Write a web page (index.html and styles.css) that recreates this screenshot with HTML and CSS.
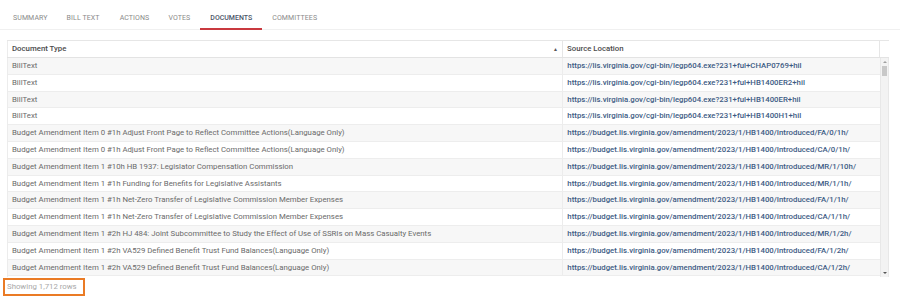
FILE: index.html
```html
<!DOCTYPE html>
<html>
<head>
<meta charset="utf-8">
<link rel="stylesheet" href="styles.css">
</head>
<body>
<div class="tabs">
  <div class="tab">Summary</div>
  <div class="tab">Bill Text</div>
  <div class="tab">Actions</div>
  <div class="tab">Votes</div>
  <div class="tab active">Documents</div>
  <div class="tab">Committees</div>
</div>
<div class="grid">
  <div class="head">
    <div class="hcell c1"><span>Document Type</span><span class="sort">&#9650;</span></div>
    <div class="hcell c2">Source Location</div>
    <div class="hpad"></div>
  </div>
  <div class="body">
    <div class="rows">
      <div class="row"><div class="cell c1">BillText</div><div class="cell c2 link">https://lis.virginia.gov/cgi-bin/legp604.exe?231+ful+CHAP0769+hil</div></div>
      <div class="row"><div class="cell c1">BillText</div><div class="cell c2 link">https://lis.virginia.gov/cgi-bin/legp604.exe?231+ful+HB1400ER2+hil</div></div>
      <div class="row"><div class="cell c1">BillText</div><div class="cell c2 link">https://lis.virginia.gov/cgi-bin/legp604.exe?231+ful+HB1400ER+hil</div></div>
      <div class="row"><div class="cell c1">BillText</div><div class="cell c2 link">https://lis.virginia.gov/cgi-bin/legp604.exe?231+ful+HB1400H1+hil</div></div>
      <div class="row"><div class="cell c1">Budget Amendment Item 0 #1h Adjust Front Page to Reflect Committee Actions(Language Only)</div><div class="cell c2 link">https://budget.lis.virginia.gov/amendment/2023/1/HB1400/Introduced/FA/0/1h/</div></div>
      <div class="row"><div class="cell c1">Budget Amendment Item 0 #1h Adjust Front Page to Reflect Committee Actions(Language Only)</div><div class="cell c2 link">https://budget.lis.virginia.gov/amendment/2023/1/HB1400/Introduced/CA/0/1h/</div></div>
      <div class="row"><div class="cell c1">Budget Amendment Item 1 #10h HB 1937: Legislator Compensation Commission</div><div class="cell c2 link">https://budget.lis.virginia.gov/amendment/2023/1/HB1400/Introduced/MR/1/10h/</div></div>
      <div class="row"><div class="cell c1">Budget Amendment Item 1 #1h Funding for Benefits for Legislative Assistants</div><div class="cell c2 link">https://budget.lis.virginia.gov/amendment/2023/1/HB1400/Introduced/MR/1/1h/</div></div>
      <div class="row"><div class="cell c1">Budget Amendment Item 1 #1h Net-Zero Transfer of Legislative Commission Member Expenses</div><div class="cell c2 link">https://budget.lis.virginia.gov/amendment/2023/1/HB1400/Introduced/FA/1/1h/</div></div>
      <div class="row"><div class="cell c1">Budget Amendment Item 1 #1h Net-Zero Transfer of Legislative Commission Member Expenses</div><div class="cell c2 link">https://budget.lis.virginia.gov/amendment/2023/1/HB1400/Introduced/CA/1/1h/</div></div>
      <div class="row"><div class="cell c1">Budget Amendment Item 1 #2h HJ 484: Joint Subcommittee to Study the Effect of Use of SSRIs on Mass Casualty Events</div><div class="cell c2 link">https://budget.lis.virginia.gov/amendment/2023/1/HB1400/Introduced/MR/1/2h/</div></div>
      <div class="row"><div class="cell c1">Budget Amendment Item 1 #2h VA529 Defined Benefit Trust Fund Balances(Language Only)</div><div class="cell c2 link">https://budget.lis.virginia.gov/amendment/2023/1/HB1400/Introduced/FA/1/2h/</div></div>
      <div class="row"><div class="cell c1">Budget Amendment Item 1 #2h VA529 Defined Benefit Trust Fund Balances(Language Only)</div><div class="cell c2 link">https://budget.lis.virginia.gov/amendment/2023/1/HB1400/Introduced/CA/1/2h/</div></div>
    </div>
    <div class="scrollbar">
      <div class="arrow up"></div>
      <div class="track"><div class="thumb"></div></div>
      <div class="arrow down"></div>
    </div>
  </div>
</div>
<div class="footer"><div class="count">Showing 1,712 rows</div></div>
</body>
</html>
```
FILE: styles.css
```css
* { box-sizing: border-box; }
html, body { margin: 0; padding: 0; background: #fff; }
body {
  font-family: Roboto, "Liberation Sans", Arial, sans-serif;
  width: 900px;
  height: 300px;
  overflow: hidden;
}
.tabs {
  display: flex;
  height: 30px;
  padding-left: 3px;
  border-bottom: 1px solid #f0f0f0;
  margin-bottom: 10px;
}
.tab {
  text-transform: uppercase;
  font-size: 7px;
  color: #8a8a8a;
  padding: 0 10px;
  height: 30px;
  line-height: 36px;
  letter-spacing: 0.1px;
  border-bottom: 2px solid transparent;
}
.tab:nth-child(2) { padding: 0 10px 0 9px; }
.tab:nth-child(4) { padding: 0 10px 0 9px; }
.tab.active {
  color: #4a5568;
  font-weight: 500;
  letter-spacing: 0;
  border-bottom: 2px solid #c9393f;
}
.grid {
  margin-left: 7px;
  width: 882px;
}
.head {
  display: flex;
  height: 18px;
  border-top: 1px solid #e6e6e6;
  border-bottom: 1px solid #e3e3e3;
}
.hcell {
  font-size: 7.8px;
  font-weight: 500;
  color: #4b4b4b;
  line-height: 16px;
  padding-left: 4px;
}
.hcell.c1 {
  width: 556px;
  display: flex;
  justify-content: space-between;
  border-left: 1px solid #ececec;
  border-right: 1px solid #e6e6e6;
}
.hcell.c2 {
  width: 317px;
  border-right: 1px solid #e6e6e6;
}
.sort {
  font-size: 5px;
  color: #555;
  padding-right: 4px;
}
.hpad { width: 9px; }
.body {
  display: flex;
  height: 219px;
}
.rows {
  width: 873px;
  border-left: 1px solid #ececec;
}
.row {
  display: flex;
  height: 16.8px;
  border-bottom: 1px solid #ededed;
}
.row:nth-child(odd) { background: #f7f7f7; }
.cell {
  font-size: 7.8px;
  line-height: 16px;
  padding-left: 4px;
  white-space: nowrap;
  overflow: hidden;
}
.cell.c1 {
  width: 556px;
  color: #6a6a6a;
  border-right: 1px solid #ececec;
}
.cell.c2 {
  width: 317px;
}
.link {
  color: #3d5b84;
  font-weight: 500;
}
.scrollbar {
  width: 9px;
  display: flex;
  flex-direction: column;
  background: #f3f3f3;
  border-left: 1px solid #e8e8e8;
  border-right: 1px solid #e8e8e8;
}
.arrow {
  height: 8px;
  position: relative;
}
.arrow::after {
  content: "";
  position: absolute;
  left: 2px;
  width: 0;
  height: 0;
  border-left: 2px solid transparent;
  border-right: 2px solid transparent;
}
.arrow.up::after { top: 3px; border-bottom: 2px solid #a0a0a0; }
.arrow.down::after { top: 3px; border-top: 2px solid #555; }
.track { flex: 1; position: relative; }
.thumb {
  margin: 0 1px;
  height: 10px;
  background: #c8c8c8;
}
.footer {
  padding: 1px 0 0 3px;
}
.count {
  width: 82px;
  border: 2px solid #ea7b25;
  font-size: 7.8px;
  color: #a8a8a8;
  padding: 0 0 0 2px;
  height: 18px;
  line-height: 14px;
  white-space: nowrap;
}
```
